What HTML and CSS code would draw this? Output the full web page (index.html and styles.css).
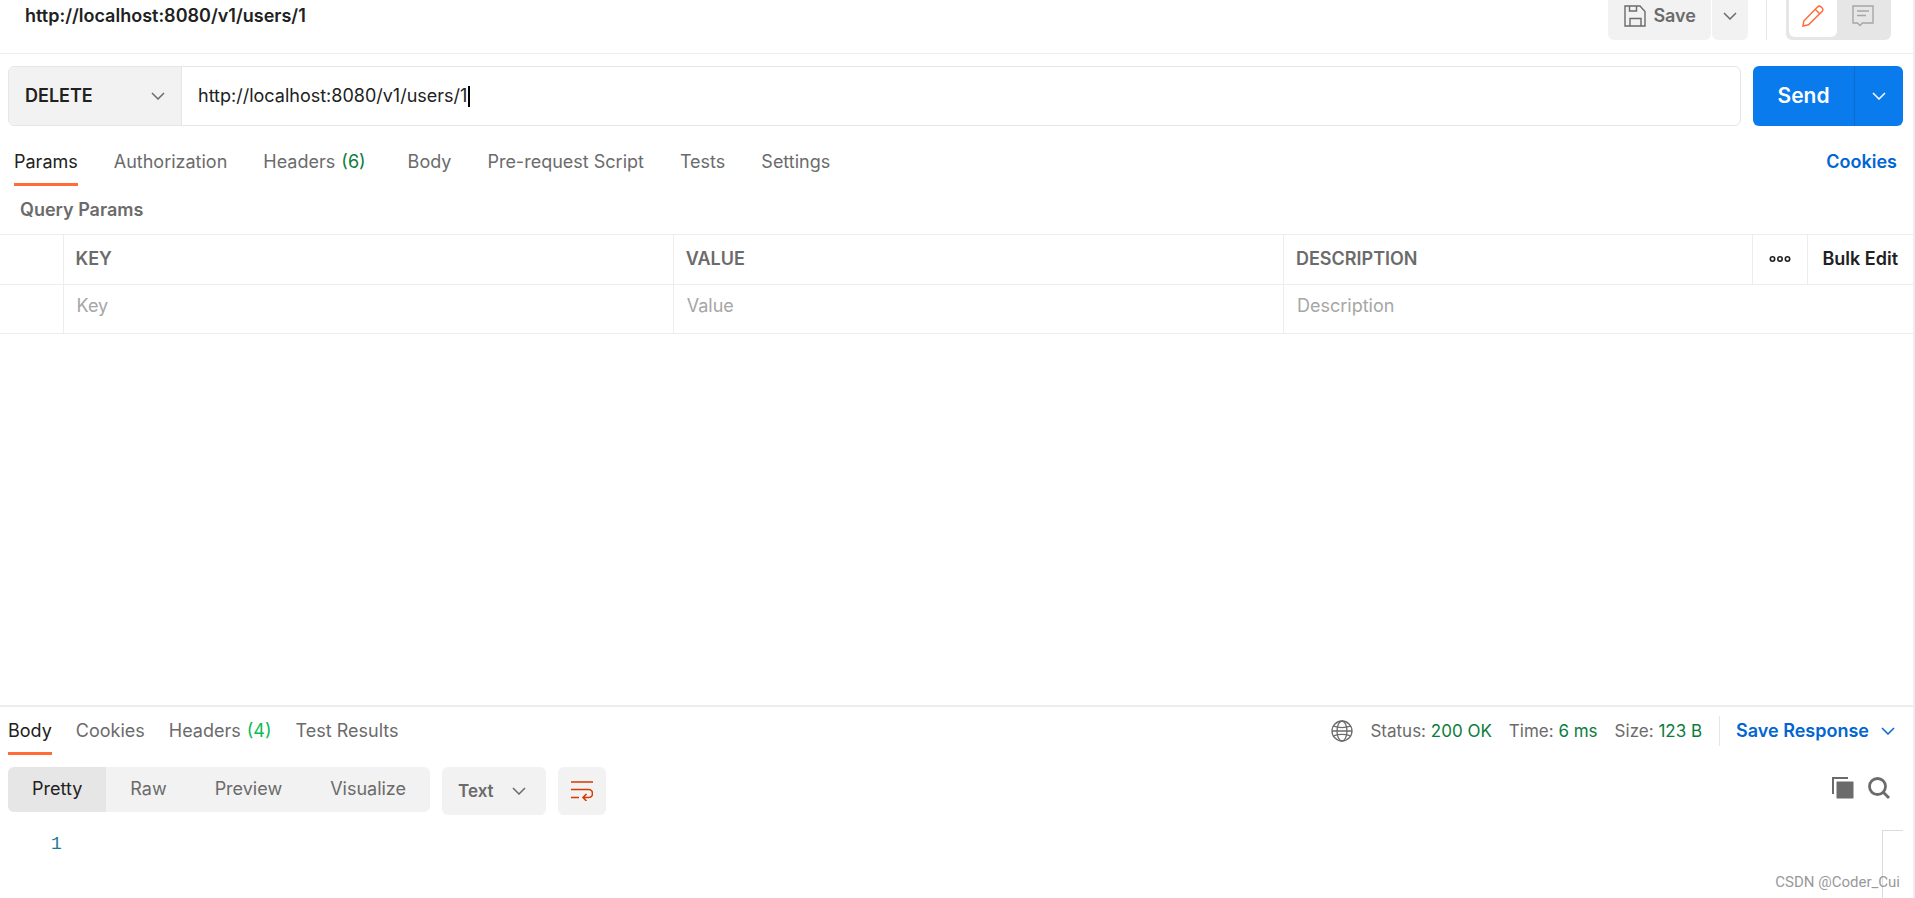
FILE: index.html
```html
<!DOCTYPE html>
<html lang="en">
<head>
    <meta charset="UTF-8">
    <meta name="viewport" content="width=device-width, initial-scale=1.0">
    <title>http://localhost:8080/v1/users/1</title>
    <link rel="stylesheet" href="styles.css">
</head>
<body>
    <!-- Request title and save buttons -->
    <header class="title-bar">
        <h1>http://localhost:8080/v1/users/1</h1>
        <div class="save-group">
            <button class="save">
                <svg width="22" height="22" viewBox="0 0 22 22" fill="none" stroke="#6b6b6b" stroke-width="1.4">
                    <path d="M1 1h15l5 5.500V21H1zM5.500 1v5h7V1M6 21v-7.500h11V21"/>
                </svg>
                Save
            </button>
            <button class="save-more" aria-label="Save options">
                <svg class="chevron" width="14" height="8" viewBox="0 0 14 8"><path d="M1 1l6 6 6-6"/></svg>
            </button>
        </div>
        <div class="mode-divider"></div>
        <div class="mode-switch">
            <button class="mode active" aria-label="Edit">
                <svg width="22" height="22" viewBox="0 0 22 22" fill="none" stroke="#ff6c37" stroke-width="1.500">
                    <path d="M1 21l.8-5L15.500 2c1-1 2.500-1 3.500-.2l1.200 1.200c1 1 .8 2.500-.2 3.500L6.500 19.800 1 21zM13.200 4.300l4.500 4.500"/>
                </svg>
            </button>
            <button class="mode" aria-label="Comments">
                <svg width="22" height="22" viewBox="0 0 22 22" fill="none" stroke="#a6a6a6" stroke-width="1.4">
                    <path d="M1 1h20v17H10.500L8 20.500 5.500 18H1zM5 6h12M5 10.500h9"/>
                </svg>
            </button>
        </div>
    </header>

    <!-- Request line -->
    <div class="request-line">
        <div class="url-box">
            <div class="method">
                <select aria-label="Method">
                    <option>DELETE</option>
                    <option>GET</option>
                    <option>POST</option>
                    <option>PUT</option>
                </select>
                <svg class="chevron" width="14" height="8" viewBox="0 0 14 8"><path d="M1 1l6 6 6-6"/></svg>
            </div>
            <label class="url">
                <input type="text" value="http://localhost:8080/v1/users/1" aria-label="Request URL">
                <span class="caret"></span>
            </label>
        </div>
        <div class="send-group">
            <button class="send">Send</button>
            <button class="send-more" aria-label="Send options">
                <svg class="chevron" width="14" height="8" viewBox="0 0 14 8"><path d="M1 1l6 6 6-6"/></svg>
            </button>
        </div>
    </div>

    <nav class="request-tabs">
        <button class="tab active">Params</button>
        <button class="tab">Authorization</button>
        <button class="tab with-count">Headers <span class="count">(6)</span></button>
        <button class="tab">Body</button>
        <button class="tab">Pre-request Script</button>
        <button class="tab">Tests</button>
        <button class="tab">Settings</button>
        <a href="#" class="cookies">Cookies</a>
    </nav>

    <!-- Query params -->
    <main class="params">
        <h2>Query Params</h2>
        <table>
            <colgroup>
                <col class="col-check">
                <col class="col-key">
                <col class="col-key">
                <col>
                <col class="col-more">
                <col class="col-bulk">
            </colgroup>
            <thead>
                <tr>
                    <th></th>
                    <th>KEY</th>
                    <th>VALUE</th>
                    <th>DESCRIPTION</th>
                    <th class="center">
                        <button aria-label="Columns">
                            <svg width="22" height="8" viewBox="0 0 22 8" fill="none" stroke="#212121" stroke-width="1.600">
                                <circle cx="3.500" cy="4" r="2.200"/>
                                <circle cx="11" cy="4" r="2.200"/>
                                <circle cx="18.500" cy="4" r="2.200"/>
                            </svg>
                        </button>
                    </th>
                    <th class="center"><button>Bulk Edit</button></th>
                </tr>
            </thead>
            <tbody>
                <tr>
                    <td></td>
                    <td><input type="text" placeholder="Key" aria-label="Key"></td>
                    <td><input type="text" placeholder="Value" aria-label="Value"></td>
                    <td colspan="3"><input type="text" placeholder="Description" aria-label="Description"></td>
                </tr>
            </tbody>
        </table>
    </main>

    <!-- Response -->
    <section class="response">
        <div class="response-head">
            <button class="tab active">Body</button>
            <button class="tab">Cookies</button>
            <button class="tab">Headers <span class="count bright">(4)</span></button>
            <button class="tab">Test Results</button>
            <div class="meta">
                <svg width="22" height="22" viewBox="0 0 22 22" fill="none" stroke="#6b6b6b" stroke-width="1.300">
                    <circle cx="11" cy="11" r="10"/>
                    <ellipse cx="11" cy="11" rx="5" ry="10"/>
                    <path d="M2.500 6.200c5 1.600 12 1.600 17 0M2.500 15.800c5-1.600 12-1.600 17 0M1 11h20"/>
                </svg>
                <span>Status: <b>200 OK</b></span>
                <span>Time: <b>6 ms</b></span>
                <span>Size: <b>123 B</b></span>
            </div>
            <button class="save-response">
                Save Response
                <svg class="chevron" width="14" height="8" viewBox="0 0 14 8"><path d="M1 1l6 6 6-6"/></svg>
            </button>
        </div>

        <div class="response-tools">
            <div class="views">
                <button class="active">Pretty</button>
                <button>Raw</button>
                <button>Preview</button>
                <button>Visualize</button>
            </div>
            <div class="format">
                <select aria-label="Format">
                    <option>Text</option>
                    <option>JSON</option>
                    <option>XML</option>
                    <option>HTML</option>
                </select>
                <svg class="chevron" width="14" height="8" viewBox="0 0 14 8"><path d="M1 1l6 6 6-6"/></svg>
            </div>
            <button class="wrap" aria-label="Wrap lines">
                <svg width="22" height="20" viewBox="0 0 22 20" fill="none" stroke="#d83b01" stroke-width="1.600">
                    <path d="M0 1h22M0 8.500h17.500a4 4 0 0 1 0 8H12M0 16.500h8M15.500 13l-3.500 3.500 3.500 3.500"/>
                </svg>
            </button>
            <div class="tool-icons">
                <button aria-label="Copy">
                    <svg width="22" height="22" viewBox="0 0 22 22">
                        <rect x="4" y="4" width="18" height="18" rx="1" fill="#6b6b6b"/>
                        <path d="M1 17V1h15" fill="none" stroke="#6b6b6b" stroke-width="2"/>
                    </svg>
                </button>
                <button aria-label="Search">
                    <svg width="22" height="22" viewBox="0 0 22 22" fill="none" stroke="#6b6b6b" stroke-width="2.800">
                        <circle cx="9.500" cy="9.500" r="8"/>
                        <path d="M15 15l6 6"/>
                    </svg>
                </button>
            </div>
        </div>

        <div class="editor">
            <span class="line-number">1</span>
            <div class="minimap"></div>
        </div>
    </section>

    <div class="watermark">CSDN @Coder_Cui</div>
</body>
</html>
```

FILE: styles.css
```css
* {
    box-sizing: border-box;
}
body {
    margin: 0;
    height: 100vh;
    display: flex;
    flex-direction: column;
    overflow: hidden;
    font-family: Inter, sans-serif;
    font-size: 18px;
    line-height: 24px;
    color: #6b6b6b;
    background-color: #fff;
    border-right: 2px solid #ededed;
}
button, input, select {
    font: inherit;
    color: inherit;
    border: none;
    background: none;
    padding: 0;
    margin: 0;
    outline: none;
}
button, select {
    cursor: pointer;
}
svg {
    display: block;
    flex: none;
}
.chevron {
    fill: none;
    stroke: #6b6b6b;
    stroke-width: 1.5;
}

/* title bar */
.title-bar {
    display: flex;
    height: 54px;
    padding: 0 22px 0 25px;
    border-bottom: 1px solid #ededed;
}
.title-bar h1 {
    margin: 4px auto 0 0;
    font-size: 18px;
    font-weight: 600;
    color: #212121;
}
.save-group {
    display: flex;
    gap: 1px;
    height: 40px;
}
.save, .save-more {
    display: flex;
    align-items: center;
    background-color: #f2f2f2;
    font-weight: 600;
    padding-bottom: 8px;
}
.save {
    gap: 7px;
    padding-left: 16px;
    padding-right: 15px;
    border-radius: 0 0 6px 6px;
}
.save-more {
    padding-left: 11px;
    padding-right: 11px;
    border-radius: 0 0 6px 6px;
}
.mode-divider {
    width: 1px;
    height: 40px;
    margin: 0 19px 0 18px;
    background-color: #e6e6e6;
}
.mode-switch {
    display: flex;
    height: 40px;
    padding: 0 3px 3px;
    border-radius: 0 0 6px 6px;
    background-color: #e6e6e6;
}
.mode {
    display: flex;
    justify-content: center;
    width: 51px;
    padding-top: 5px;
}
.mode.active {
    width: 48px;
    border-radius: 0 0 6px 6px;
    background-color: #fff;
}

/* request line */
.request-line {
    display: flex;
    gap: 12px;
    height: 60px;
    margin: 12px 10px 0 8px;
}
.url-box {
    display: flex;
    flex: 1;
    border: 1px solid #e6e6e6;
    border-radius: 6px;
    overflow: hidden;
}
.method {
    display: flex;
    align-items: center;
    width: 173px;
    padding: 0 16px;
    background-color: #f2f2f2;
    border-right: 1px solid #e6e6e6;
    font-weight: 600;
    color: #212121;
}
select {
    flex: 1;
    min-width: 0;
    appearance: none;
}
.url {
    display: flex;
    flex: 1;
    align-items: center;
    padding-left: 16px;
    color: #212121;
}
.url input {
    field-sizing: content;
}
.caret {
    width: 2px;
    height: 21px;
    margin-left: 1px;
    background-color: #000;
}
.send-group {
    display: flex;
    border-radius: 6px;
    overflow: hidden;
    background-color: #097bed;
}
.send {
    width: 101px;
    font-size: 21px;
    font-weight: 600;
    color: #fff;
}
.send-more {
    display: flex;
    align-items: center;
    justify-content: center;
    width: 49px;
    border-left: 1px solid #0a6bd0;
}
.send-more .chevron {
    stroke: #fff;
}

/* tabs */
.request-tabs {
    display: flex;
    gap: 36px;
    margin-top: 24px;
    padding: 0 16px 0 14px;
}
.tab {
    height: 36px;
    padding-bottom: 9px;
    border-bottom: 3px solid transparent;
    white-space: nowrap;
}
.tab.active {
    color: #212121;
    border-bottom-color: #ff6c37;
}
.with-count {
    padding-right: 6px;
}
.count {
    margin-left: 1px;
    color: #0b7c3e;
}
.count.bright {
    color: #0cbb52;
}
.cookies {
    margin-left: auto;
    font-weight: 600;
    color: #0265d2;
    text-decoration: none;
}

/* query params */
.params {
    flex: 1;
}
.params h2 {
    margin: 12px 20px;
    font-size: 18px;
    font-weight: 600;
}
table {
    width: 100%;
    table-layout: fixed;
    border-collapse: collapse;
}
.col-check {
    width: 63px;
}
.col-key {
    width: 31.9%;
}
.col-more {
    width: 55px;
}
.col-bulk {
    width: 106px;
}
th, td {
    height: 50px;
    padding: 0 12px;
    text-align: left;
    border: 1px solid #ededed;
    border-width: 1px 0 1px 1px;
}
th:first-child, td:first-child {
    border-left: none;
}
th {
    padding-bottom: 2px;
    font-weight: 600;
}
td {
    height: 49px;
    padding: 0 13px 6px;
}
td input {
    width: 100%;
}
td input::placeholder {
    color: #a6a6a6;
    opacity: 1;
}
th.center {
    padding: 0 0 2px;
    color: #212121;
}
th.center button {
    display: flex;
    margin: 0 auto;
}

/* response */
.response {
    display: flex;
    flex-direction: column;
    height: 193px;
    border-top: 2px solid #ededed;
}
.response-head {
    display: flex;
    gap: 24px;
    padding: 12px 18px 0 8px;
}
.meta {
    display: flex;
    align-items: center;
    gap: 17px;
    height: 24px;
    margin-left: auto;
    font-size: 17px;
}
.meta b {
    font-weight: 400;
    color: #0b7c3e;
}
.save-response {
    display: flex;
    align-items: center;
    gap: 12px;
    height: 30px;
    margin: -3px 0 0 -7px;
    padding-left: 16px;
    border-left: 1px solid #e6e6e6;
    font-weight: 600;
    color: #0265d2;
}
.save-response .chevron {
    stroke: #0265d2;
}
.response-tools {
    display: flex;
    align-items: flex-start;
    gap: 12px;
    margin-top: 12px;
    padding: 0 23px 0 8px;
}
.views {
    display: flex;
    height: 45px;
    border-radius: 6px;
    overflow: hidden;
    background-color: #f2f2f2;
}
.views button {
    padding: 0 24px 2px;
}
.views .active {
    background-color: #e6e6e6;
    color: #212121;
}
.format {
    display: flex;
    align-items: center;
    width: 104px;
    height: 48px;
    padding: 0 20px 0 16px;
    border-radius: 6px;
    background-color: #f2f2f2;
    font-size: 17px;
    font-weight: 600;
}
.wrap {
    display: flex;
    align-items: center;
    justify-content: center;
    width: 48px;
    height: 48px;
    border-radius: 6px;
    background-color: #f2f2f2;
}
.tool-icons {
    display: flex;
    gap: 14px;
    margin: 10px 0 0 auto;
}
.tool-icons rect {
    stroke: #fff;
    stroke-width: 1;
}
.editor {
    display: flex;
    flex: 1;
    justify-content: space-between;
    margin-top: 15px;
    padding: 0 10px 0 51px;
}
.line-number {
    padding-top: 2px;
    font-family: "Liberation Mono", monospace;
    color: #237893;
}
.minimap {
    width: 21px;
    border: 1px solid #dcdcdc;
    border-width: 1px 0 0 1px;
}
.watermark {
    position: absolute;
    right: 15px;
    bottom: 6px;
    font-family: Roboto, sans-serif;
    font-size: 15px;
    line-height: 20px;
    color: #999;
}
```
